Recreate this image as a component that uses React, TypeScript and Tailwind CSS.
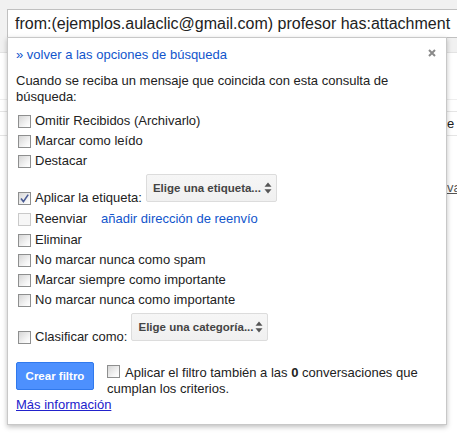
import React from "react";

function Box({ checked = false, disabled = false, className = "" }: { checked?: boolean; disabled?: boolean; className?: string }) {
  const base = disabled
    ? "border-[#cacaca] bg-[#f7f7f7]"
    : "border-[#8e8f8f] bg-[linear-gradient(135deg,#d6d6d6,#f6f6f6_70%,#ffffff)]";
  return (
    <span className={`inline-flex w-[13px] h-[13px] shrink-0 border ${base} items-center justify-center ${className}`}>
      {checked && (
        <svg width="11" height="11" viewBox="0 0 11 11">
          <path d="M2 5.6 L4.4 8.6 L9.2 1.6" fill="none" stroke="#4a5b94" strokeWidth="1.6" />
        </svg>
      )}
    </span>
  );
}

function Row({ label, checked = false }: { label: string; checked?: boolean }) {
  return (
    <div className="h-[20px] flex items-center">
      <Box checked={checked} className="ml-[2px] mr-[4px]" />
      <span>{label}</span>
    </div>
  );
}

function Arrows() {
  return (
    <svg width="8" height="12" viewBox="0 0 8 12">
      <path d="M4 0.5 L7.5 4.8 L0.5 4.8 Z" fill="#555" />
      <path d="M4 11.5 L7.5 7.2 L0.5 7.2 Z" fill="#555" />
    </svg>
  );
}

function Select({ text, width }: { text: string; width: string }) {
  return (
    <div
      className={`${width} h-[28px] border border-[#dcdcdc] rounded-[2px] bg-gradient-to-b from-[#f6f6f6] to-[#f0f0f0] flex items-center justify-between pl-[6px] pr-[4px] text-[11.5px] font-bold text-[#444] whitespace-nowrap`}
    >
      <span>{text}</span>
      <Arrows />
    </div>
  );
}

export default function App() {
  return (
    <div className="relative w-[457px] h-[433px] overflow-hidden bg-white font-['Liberation_Sans',Arial,sans-serif]">
      {/* page behind */}
      <div className="h-[53px] bg-[#f1f1f1] border-b border-[#e3e3e3] pt-[9px] pl-[7px]">
        <div className="h-[29px] bg-white border border-[#c0c0c0] border-r-0 pl-[7px] flex items-center text-[16px] text-[#222] whitespace-nowrap overflow-hidden">
          from:(ejemplos.aulaclic@gmail.com) profesor has:attachment
        </div>
      </div>
      <div className="h-[47px] border-b border-[#eeeeee]" />
      <div className="h-[11px]" />
      <div className="h-[25px] border-y border-[#e5e5e5] flex items-center pl-[447px] text-[13px] text-[#222]">e</div>
      <div className="h-[44px]" />
      <div className="pl-[447px] text-[13px] leading-[16px] text-[#555] underline whitespace-nowrap">vaciar</div>

      {/* dialog overlay */}
      <div className="absolute left-[7px] top-[37px] w-[440px] bg-white border border-[#c8c8c8] shadow-[0_2px_5px_rgba(0,0,0,0.25)] px-[8px] pt-[9px] pb-[11px] text-[13px] leading-[16px] text-[#222]">
        <svg className="absolute right-[10px] top-[11px]" width="8" height="8" viewBox="0 0 8 8">
          <path d="M1 1 L7 7 M7 1 L1 7" stroke="#8a8a8a" strokeWidth="2" />
        </svg>
        <div className="text-[#15c]">» volver a las opciones de búsqueda</div>
        <p className="mt-[10px]">Cuando se reciba un mensaje que coincida con esta consulta de búsqueda:</p>
        <div className="mt-[6px]">
          <Row label="Omitir Recibidos (Archivarlo)" />
          <Row label="Marcar como leído" />
          <Row label="Destacar" />
          <div className="mt-[3px] flex items-end">
            <div className="h-[20px] flex items-center">
              <Box checked className="ml-[2px] mr-[4px]" />
              <span>Aplicar la etiqueta:</span>
            </div>
            <div className="ml-[4px] mb-[6px]">
              <Select text="Elige una etiqueta..." width="w-[131px]" />
            </div>
          </div>
          <div className="h-[22px] flex items-center">
            <Box disabled className="ml-[2px] mr-[4px]" />
            <span>Reenviar</span>
            <span className="ml-[14px] text-[#15c]">añadir dirección de reenvío</span>
          </div>
          <Row label="Eliminar" />
          <Row label="No marcar nunca como spam" />
          <Row label="Marcar siempre como importante" />
          <Row label="No marcar nunca como importante" />
          <div className="mt-[3px] flex items-end">
            <div className="h-[20px] flex items-center">
              <Box className="ml-[2px] mr-[4px]" />
              <span>Clasificar como:</span>
            </div>
            <div className="ml-[4px] mb-[6px]">
              <Select text="Elige una categoría..." width="w-[137px]" />
            </div>
          </div>
        </div>
        <div className="mt-[15px] flex items-start">
          <div className="w-[78px] h-[28px] shrink-0 bg-[#4d90fe] border border-[#3079ed] rounded-[2px] flex items-center justify-center text-white font-bold text-[11.5px]">
            Crear filtro
          </div>
          <div className="ml-[13px] mt-[3px] flex-1">
            <Box className="mr-[5px] align-[-1px]" />
            Aplicar el filtro también a las <b>0</b> conversaciones que cumplan los criterios.
          </div>
        </div>
        <div className="text-[#2222cc] underline">Más información</div>
      </div>
    </div>
  );
}
